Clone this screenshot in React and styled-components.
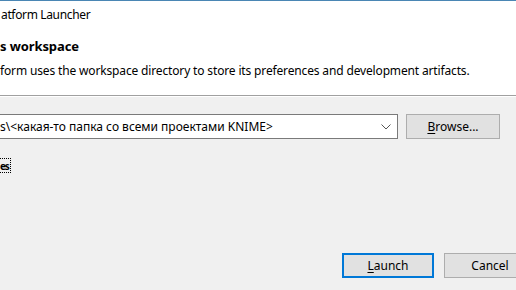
import styled, { createGlobalStyle } from 'styled-components';

const GlobalStyle = createGlobalStyle`
  html, body {
    margin: 0;
    padding: 0;
    background: #f0f0f0;
  }
  body {
    font-family: "Noto Sans", "Open Sans", sans-serif;
    font-size: 12px;
    color: #000;
  }
`;

const Window = styled.div`
  width: 516px;
  height: 290px;
  overflow: hidden;
  display: flex;
  flex-direction: column;
  border-top: 1px solid #4a86b4;
  box-sizing: border-box;
  background: #f0f0f0;
`;

const Header = styled.div`
  background: #fff;
  height: 94px;
  display: flex;
  flex-direction: column;
  border-bottom: 1px solid #a0a0a0;
`;

const Title = styled.div`
  padding: 6px 0 0 1px;
  height: 22px;
  line-height: 16px;
  letter-spacing: -0.35px;
  white-space: nowrap;
`;

const Heading = styled.div`
  margin-top: 8px;
  font-weight: 700;
  font-size: 13px;
  line-height: 18px;
  letter-spacing: -0.1px;
  white-space: nowrap;
`;

const Description = styled.div`
  margin-top: 8px;
  line-height: 16px;
  letter-spacing: -0.15px;
  white-space: nowrap;
`;

const Body = styled.div`
  flex: 1;
  display: flex;
  flex-direction: column;
  border-top: 1px solid #fff;
  padding-top: 17px;
`;

const Row = styled.div`
  display: flex;
  align-items: center;
  height: 25px;
`;

const Combo = styled.div`
  width: 398px;
  height: 25px;
  box-sizing: border-box;
  border: 1px solid #7a7a7a;
  border-left: none;
  background: #fff;
  display: flex;
  align-items: center;
  padding-right: 6px;
`;

const ComboText = styled.span`
  flex: 1;
  white-space: nowrap;
  overflow: hidden;
`;

const Button = styled.div`
  width: ${({ $w }) => $w}px;
  height: 25px;
  box-sizing: border-box;
  flex-shrink: 0;
  background: #e1e1e1;
  border: ${({ $default }) => ($default ? '2px solid #0078d7' : '1px solid #adadad')};
  display: flex;
  align-items: center;
  justify-content: center;
  white-space: nowrap;
`;

const Mnemonic = styled.span`
  text-decoration: underline;
  text-underline-offset: 2px;
`;

const FocusLabel = styled.div`
  margin-top: 20px;
  align-self: flex-start;
  padding-right: 1px;
  height: 13px;
  display: flex;
  align-items: center;
  font-weight: 700;
  font-size: 10px;
  line-height: 12px;
  letter-spacing: -1.2px;
  outline: 1px dotted #000;
`;

const Footer = styled.div`
  margin-top: auto;
  display: flex;
  gap: 10px;
  padding-left: 342px;
  padding-bottom: 12px;
`;

const Gap = styled.div`
  width: 8px;
  flex-shrink: 0;
`;

const Chevron = () => (
  <svg width="10" height="6" viewBox="0 0 10 6">
    <path d="M0.5 0.5 L5 5 L9.5 0.5" fill="none" stroke="#555" strokeWidth="1" />
  </svg>
);

export default function App() {
  return (
    <>
      <GlobalStyle />
      <Window>
        <Header>
          <Title>atform Launcher</Title>
          <Heading>s workspace</Heading>
          <Description>
            form uses the workspace directory to store its preferences and development artifacts.
          </Description>
        </Header>
        <Body>
          <Row>
            <Combo>
              <ComboText>s\&lt;какая-то папка со всеми проектами KNIME&gt;</ComboText>
              <Chevron />
            </Combo>
            <Gap />
            <Button $w={94}>
              <Mnemonic>B</Mnemonic>rowse...
            </Button>
          </Row>
          <FocusLabel>es</FocusLabel>
          <Footer>
            <Button $w={92} $default>
              <Mnemonic>L</Mnemonic>aunch
            </Button>
            <Button $w={92}>Cancel</Button>
          </Footer>
        </Body>
      </Window>
    </>
  );
}
